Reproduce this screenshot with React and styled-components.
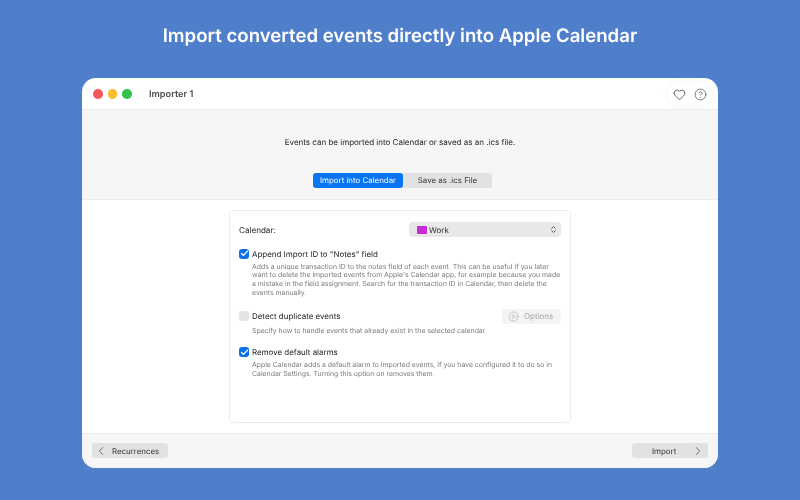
import React from "react";
import styled, { createGlobalStyle } from "styled-components";
import { Heart, CircleHelp, ChevronLeft, ChevronRight, ChevronsUpDown, CirclePlay, Check } from "lucide-react";

const Global = createGlobalStyle`
	html, body {
		margin: 0;
		padding: 0;
		height: 100%;
	}
	body {
		background: #4f7fcb;
		font-family: Inter, "Liberation Sans", sans-serif;
		text-rendering: geometricPrecision;
		overflow: hidden;
	}
`;

const Option = ({ checked, label, action, children }) => (
	<OptionBlock>
		<OptionRow>
			<CheckBox $checked={checked}>
				{checked && <Check size={9} strokeWidth={3.5} color="#fff" />}
			</CheckBox>
			<OptionLabel>{label}</OptionLabel>
			{action}
		</OptionRow>
		<Description>{children}</Description>
	</OptionBlock>
);

const App = () => {
	return (
		<Page>
			<Global />
			<Headline>Import converted events directly into Apple Calendar</Headline>
			<Window>
				<TitleBar>
					<Lights>
						<Light $color="#f4575c" />
						<Light $color="#fbbc2e" />
						<Light $color="#30c548" />
					</Lights>
					<WindowTitle>Importer 1</WindowTitle>
					<TitleTools>
						<Heart size={13} strokeWidth={1.5} color="#444" />
						<CircleHelp size={13} strokeWidth={1.3} color="#444" />
					</TitleTools>
				</TitleBar>
				<Intro>
					<IntroText>Events can be imported into Calendar or saved as an .ics file.</IntroText>
					<Segments>
						<Segment $active>Import into Calendar</Segment>
						<Segment>Save as .ics File</Segment>
					</Segments>
				</Intro>
				<Content>
					<Panel>
						<CalendarRow>
							<CalendarLabel>Calendar:</CalendarLabel>
							<Select>
								<Swatch />
								<SelectValue>Work</SelectValue>
								<ChevronsUpDown size={9} strokeWidth={2} color="#333" />
							</Select>
						</CalendarRow>
						<Option checked label={'Append Import ID to "Notes" field'}>
							Adds a unique transaction ID to the notes field of each event. This can be useful if you later
							<br />
							want to delete the imported events from Apple's Calendar app, for example because you made
							<br />
							a mistake in the field assignment. Search for the transaction ID in Calendar, then delete the
							<br />
							events manually.
						</Option>
						<Option
							label="Detect duplicate events"
							action={
								<OptionsButton>
									<CirclePlay size={11} strokeWidth={1.3} color="#a5a5a5" />
									Options
								</OptionsButton>
							}
						>
							Specify how to handle events that already exist in the selected calendar.
						</Option>
						<Option checked label="Remove default alarms">
							Apple Calendar adds a default alarm to imported events, if you have configured it to do so in
							<br />
							Calendar Settings. Turning this option on removes them.
						</Option>
					</Panel>
				</Content>
				<Footer>
					<BackButton>
						<ChevronLeft size={14} strokeWidth={1.4} color="#555" />
						<span>Recurrences</span>
					</BackButton>
					<NextButton>
						<span>Import</span>
						<ChevronRight size={14} strokeWidth={1.4} color="#555" />
					</NextButton>
				</Footer>
			</Window>
		</Page>
	);
};

export default App;

const Page = styled.div`
	width: 800px;
	height: 500px;
	display: flex;
	flex-direction: column;
	align-items: center;
	will-change: transform;
`;

const Headline = styled.h1`
	height: 78px;
	margin: 0;
	padding-bottom: 7px;
	box-sizing: border-box;
	display: flex;
	align-items: center;
	font-size: 18.6px;
	font-weight: 600;
	color: #fff;
`;

const Window = styled.div`
	width: 636px;
	height: 390px;
	display: flex;
	flex-direction: column;
	background: #fff;
	border-radius: 14px;
	overflow: hidden;
`;

const TitleBar = styled.div`
	position: relative;
	height: 32px;
	flex: none;
	display: flex;
	align-items: center;
	padding: 1px 0 0 11px;
	box-sizing: border-box;
	border-bottom: 1px solid #ececec;
`;

const Lights = styled.div`
	display: flex;
	gap: 5px;
`;

const Light = styled.span`
	width: 9.5px;
	height: 9.5px;
	border-radius: 50%;
	background: ${({ $color }) => $color};
`;

const WindowTitle = styled.div`
	margin-left: 17.5px;
	font-size: 9.2px;
	font-weight: 600;
	color: #4a4a4a;
`;

const TitleTools = styled.div`
	position: absolute;
	right: 6px;
	top: 5px;
	width: 44px;
	height: 22px;
	display: flex;
	align-items: center;
	justify-content: center;
	gap: 8px;
	background: #fff;
	border-radius: 11px;
	box-shadow: 0 0 7px rgb(0 0 0 / 0.05);
`;

const Intro = styled.div`
	height: 90px;
	flex: none;
	display: flex;
	flex-direction: column;
	align-items: center;
	box-sizing: border-box;
	padding-top: 25.5px;
	background: #f6f6f6;
	border-bottom: 1px solid #ececec;
`;

const IntroText = styled.div`
	font-size: 8px;
	line-height: 12px;
	color: #222;
`;

const Segments = styled.div`
	display: flex;
	margin: 25px 0 0 5px;
	background: #e2e2e2;
	border-radius: 3px;
`;

const Segment = styled.div`
	width: ${({ $active }) => ($active ? "90px" : "89px")};
	height: 15px;
	display: flex;
	align-items: center;
	justify-content: center;
	font-size: 7.9px;
	color: ${({ $active }) => ($active ? "#fff" : "#333")};
	background: ${({ $active }) => ($active ? "#0a75f0" : "transparent")};
	border-radius: 3px;
`;

const Content = styled.div`
	flex: 1;
	min-height: 0;
	display: flex;
	justify-content: center;
	padding: 10px 0;
	box-sizing: border-box;
`;

const Panel = styled.div`
	width: 342px;
	box-sizing: border-box;
	padding: 11px 9px 0 9px;
	border: 1px solid #ececec;
	border-radius: 4px;
`;

const CalendarRow = styled.div`
	display: flex;
	align-items: center;
	justify-content: space-between;
	height: 15px;
	margin-bottom: 9px;
`;

const CalendarLabel = styled.div`
	font-size: 8.1px;
	color: #222;
`;

const Select = styled.div`
	width: 152px;
	height: 15px;
	box-sizing: border-box;
	display: flex;
	align-items: center;
	padding: 0 3.5px 0 8px;
	background: #e8e8e8;
	border-radius: 4px;
`;

const Swatch = styled.span`
	width: 10px;
	height: 8px;
	background: #c82bd6;
	border-radius: 1px;
`;

const SelectValue = styled.span`
	flex: 1;
	margin-left: 2px;
	font-size: 8px;
	color: #333;
`;

const OptionBlock = styled.div`
	margin-bottom: 9px;
`;

const OptionRow = styled.div`
	display: flex;
	align-items: center;
	min-height: 15px;
`;

const CheckBox = styled.span`
	width: 10px;
	height: 10px;
	flex: none;
	display: flex;
	align-items: center;
	justify-content: center;
	border-radius: 3px;
	background: ${({ $checked }) => ($checked ? "#0a6fe8" : "#e4e4e4")};
`;

const OptionLabel = styled.div`
	flex: 1;
	margin-left: 3px;
	font-size: 7.95px;
	color: #222;
`;

const OptionsButton = styled.div`
	width: 59px;
	height: 15px;
	margin: 1.5px 0;
	box-sizing: border-box;
	padding-left: 6px;
	display: flex;
	align-items: center;
	gap: 5px;
	font-size: 8px;
	color: #a5a5a5;
	background: #f4f4f4;
	border-radius: 3px;
`;

const Description = styled.div`
	margin: 1.5px 0 0 13px;
	font-size: 6.9px;
	line-height: 8.9px;
	color: #7a7a7a;
	white-space: nowrap;
`;

const Footer = styled.div`
	height: 35px;
	flex: none;
	display: flex;
	align-items: center;
	justify-content: space-between;
	padding: 0 10px 1px;
	box-sizing: border-box;
	background: #f6f6f6;
	border-top: 1px solid #ececec;
`;

const BackButton = styled.div`
	width: 76px;
	height: 15px;
	display: flex;
	align-items: center;
	box-sizing: border-box;
	padding-left: 2px;
	gap: 4px;
	font-size: 7.9px;
	color: #333;
	background: #e2e2e2;
	border-radius: 3px;
`;

const NextButton = styled.div`
	width: 76px;
	height: 15px;
	display: flex;
	align-items: center;
	justify-content: space-between;
	box-sizing: border-box;
	padding: 0 3px 0 20px;
	font-size: 7.9px;
	color: #333;
	background: #e2e2e2;
	border-radius: 3px;
`;
